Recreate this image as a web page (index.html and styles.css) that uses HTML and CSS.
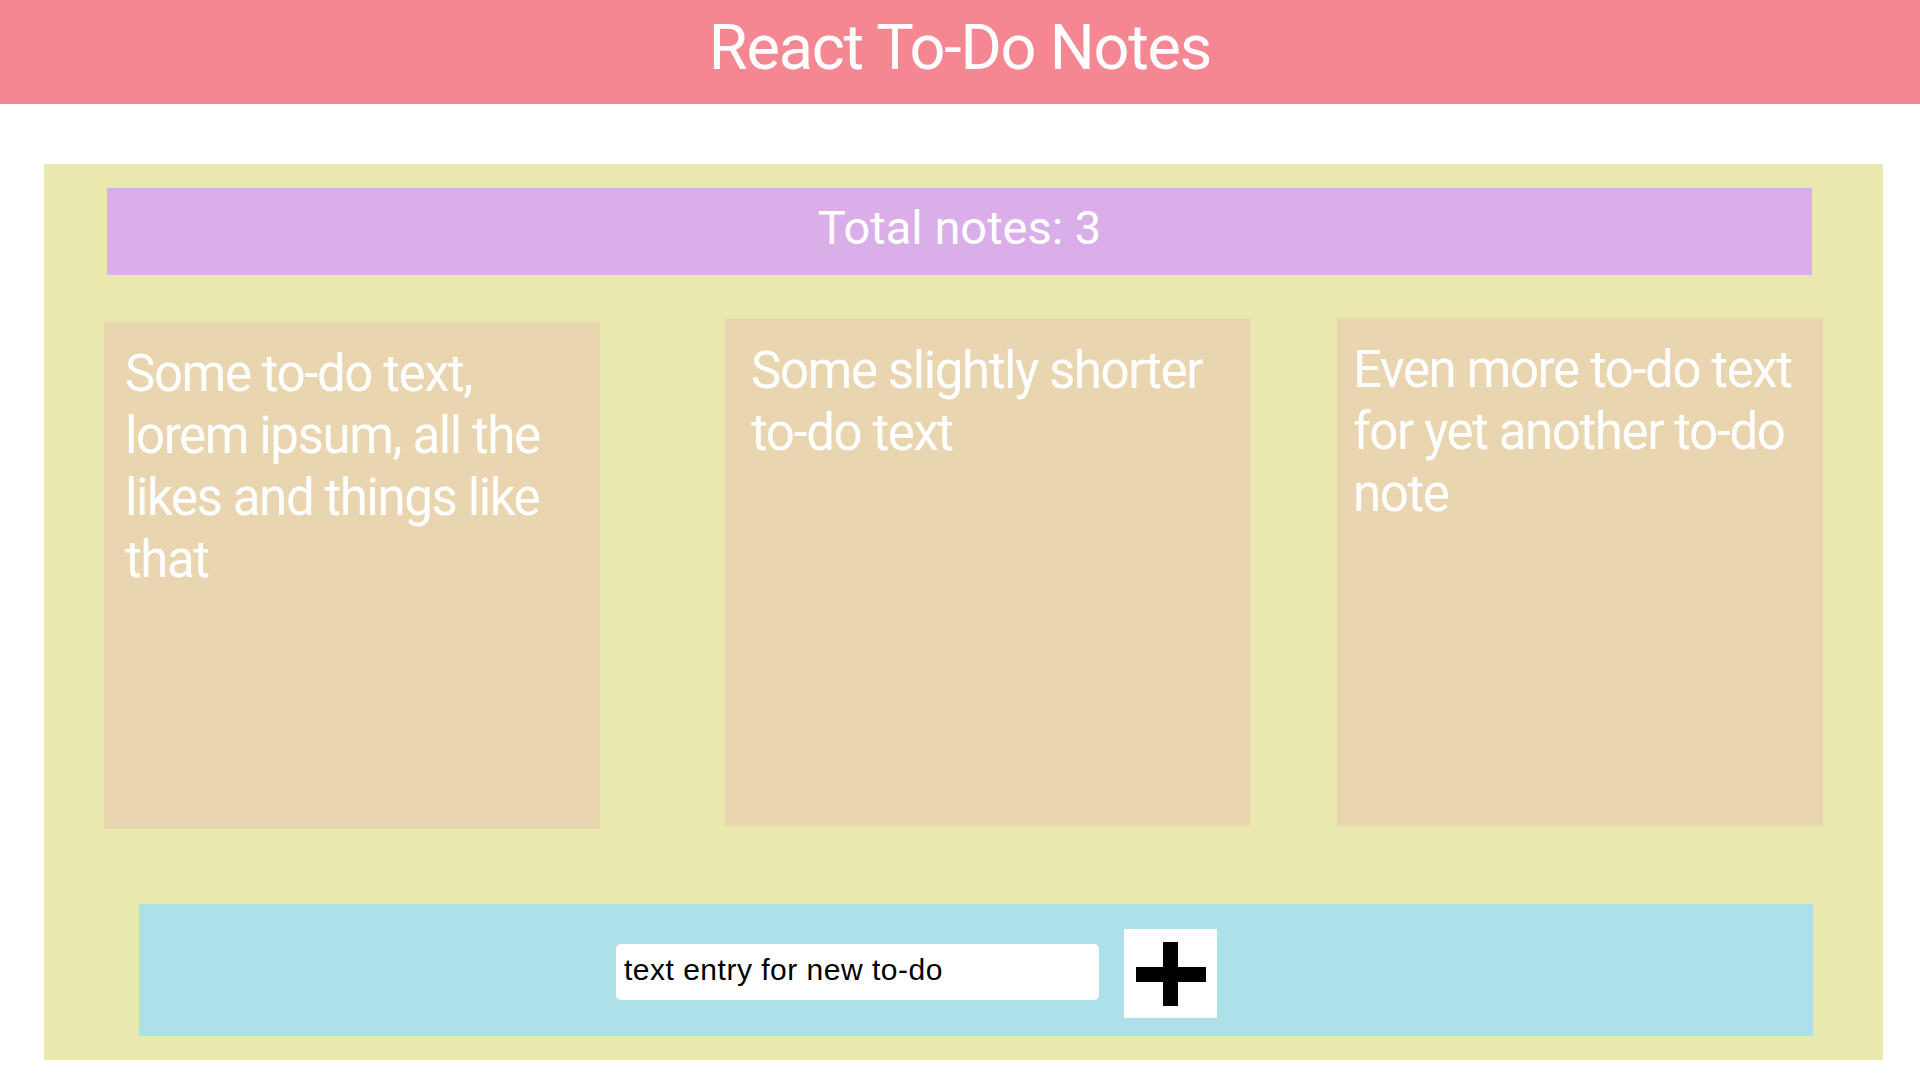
FILE: index.html
```html
<!DOCTYPE html>
<html lang="en">
<head>
<meta charset="utf-8">
<title>React To-Do Notes</title>
<link rel="stylesheet" href="styles.css">
</head>
<body>
<header class="app-header">
  <h1 class="app-title">React To-Do Notes</h1>
</header>
<main class="board">
  <div class="counter">Total notes: 3</div>
  <section class="notes">
    <article class="note note--first"><p class="note-text">Some to-do text, lorem ipsum, all the likes and things like that</p></article>
    <article class="note note--second"><p class="note-text">Some slightly shorter to-do text</p></article>
    <article class="note note--third"><p class="note-text">Even more to-do text for yet another to-do note</p></article>
  </section>
  <form class="composer" onsubmit="return false">
    <input class="composer-input" type="text" placeholder="text entry for new to-do">
    <button class="composer-add" type="submit" aria-label="Add note">
      <svg width="70" height="64" viewBox="0 0 70 64"><rect x="0" y="25" width="70" height="15" fill="#000"/><rect x="27" y="0" width="15" height="64" fill="#000"/></svg>
    </button>
  </form>
</main>
</body>
</html>
```
FILE: styles.css
```css
* { box-sizing: border-box; }
html, body { margin: 0; padding: 0; background: #ffffff; }
body { font-family: Roboto, "Noto Sans", sans-serif; width: 1920px; height: 1080px; overflow: hidden; }

.app-header {
  height: 104px;
  background: #f58793;
  padding-top: 10px;
}
.app-title {
  margin: 0;
  text-align: center;
  color: #ffffff;
  font-weight: 400;
  font-size: 63px;
  line-height: 75px;
  letter-spacing: -1.2px;
}

.board {
  margin: 60px 0 0 44px;
  width: 1839px;
  height: 896px;
  background: #e9e8af;
  padding: 24px 0 24px 0;
  display: flex;
  flex-direction: column;
}

.counter {
  margin: 0 71px 0 63px;
  height: 87px;
  background: #daafe9;
  color: #ffffff;
  text-align: center;
  font-size: 47px;
  line-height: 56px;
  padding-top: 12px;
}

.notes {
  display: flex;
  align-items: flex-start;
  margin-top: 43px;
  padding-left: 60px;
  height: 511px;
}
.note {
  background: #e9d5b0;
  height: 507px;
  padding-top: 21px;
}
.note-text {
  margin: 0;
  color: #ffffff;
  font-size: 51px;
  line-height: 62px;
  letter-spacing: -1.4px;
}
.note--first { width: 496px; margin-top: 4px; padding-left: 21px; padding-right: 24px; }
.note--second { width: 525px; margin-top: 1px; margin-left: 125px; padding-left: 26px; padding-right: 4px; }
.note--third { width: 486px; height: 508px; margin-left: 87px; padding-left: 16px; padding-right: 2px; }

.composer {
  margin: 75px 70px 0 95px;
  height: 132px;
  background: #aee0e9;
  display: flex;
  align-items: flex-start;
  padding-left: 477px;
}
.composer-input {
  margin-top: 40px;
  width: 483px;
  height: 56px;
  border: none;
  border-radius: 5px;
  background: #ffffff;
  padding: 0 8px 4px 8px;
  font-family: "Liberation Sans", Arial, sans-serif;
  font-size: 30px;
  letter-spacing: 0.5px;
  color: #000000;
  outline: none;
}
.composer-input::placeholder { color: #000000; opacity: 1; }
.composer-add {
  margin: 25px 0 0 25px;
  width: 93px;
  height: 89px;
  border: none;
  border-radius: 0;
  background: #ffffff;
  padding: 0;
  display: flex;
  align-items: center;
  justify-content: center;
  cursor: pointer;
}
.composer-add svg { display: block; }
```
